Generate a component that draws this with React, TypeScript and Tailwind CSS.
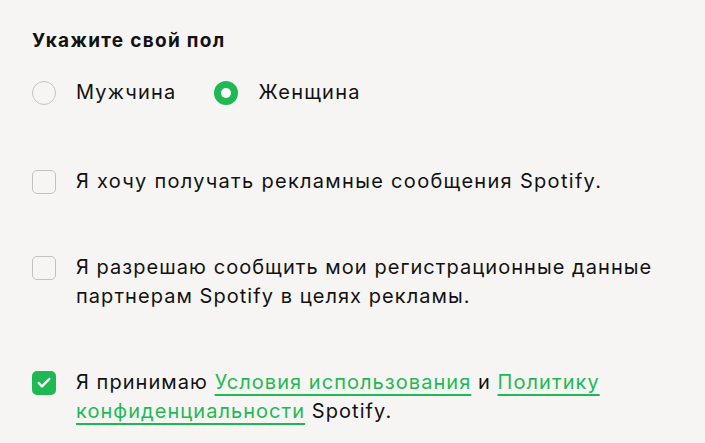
import { Check } from 'lucide-react';

export default function App() {
  const font = { fontFamily: 'Inter, "Noto Sans", sans-serif' };

  return (
    <div className="min-h-screen w-full bg-[#f6f5f3] text-[#121212] px-8 pt-[29px]" style={font}>
      <h2 className="text-[19px] leading-6 font-bold tracking-[1.3px]">Укажите свой пол</h2>

      <div className="mt-[25px] flex items-center gap-[38px] text-[20px] leading-[29px] tracking-[1.2px]">
        <label className="flex items-center gap-5">
          <span className="w-6 h-6 rounded-full border border-[#c2c2c2] bg-transparent" />
          <span>Мужчина</span>
        </label>
        <label className="flex items-center gap-5">
          <span className="w-6 h-6 rounded-full bg-[#1fb954] flex items-center justify-center">
            <span className="w-[10px] h-[10px] rounded-full bg-white" />
          </span>
          <span>Женщина</span>
        </label>
      </div>

      <div className="mt-[60px] flex flex-col gap-[57px] text-[20px] leading-[29px] tracking-[1.05px]">
        <label className="flex items-start gap-5">
          <span className="mt-[3px] w-6 h-6 shrink-0 rounded-[5px] border border-[#c2c2c2]" />
          <span className="tracking-[1.3px]">Я хочу получать рекламные сообщения Spotify.</span>
        </label>
        <label className="flex items-start gap-5">
          <span className="mt-[3px] w-6 h-6 shrink-0 rounded-[5px] border border-[#c2c2c2]" />
          <span>
            Я разрешаю сообщить мои регистрационные данные
            <br />
            партнерам Spotify в целях рекламы.
          </span>
        </label>
        <label className="flex items-start gap-5">
          <span className="mt-[3px] w-6 h-6 shrink-0 rounded-[5px] bg-[#1fb954] flex items-center justify-center">
            <Check className="w-4 h-4 text-white" strokeWidth={3.5} />
          </span>
          <span>
            Я принимаю{' '}
            <a className="text-[#1fb954] underline decoration-[1.5px] underline-offset-[5px]">Условия использования</a> и{' '}
            <a className="text-[#1fb954] underline decoration-[1.5px] underline-offset-[5px]">Политику</a>
            <br />
            <a className="text-[#1fb954] underline decoration-[1.5px] underline-offset-[5px]">конфиденциальности</a> Spotify.
          </span>
        </label>
      </div>
    </div>
  );
}
